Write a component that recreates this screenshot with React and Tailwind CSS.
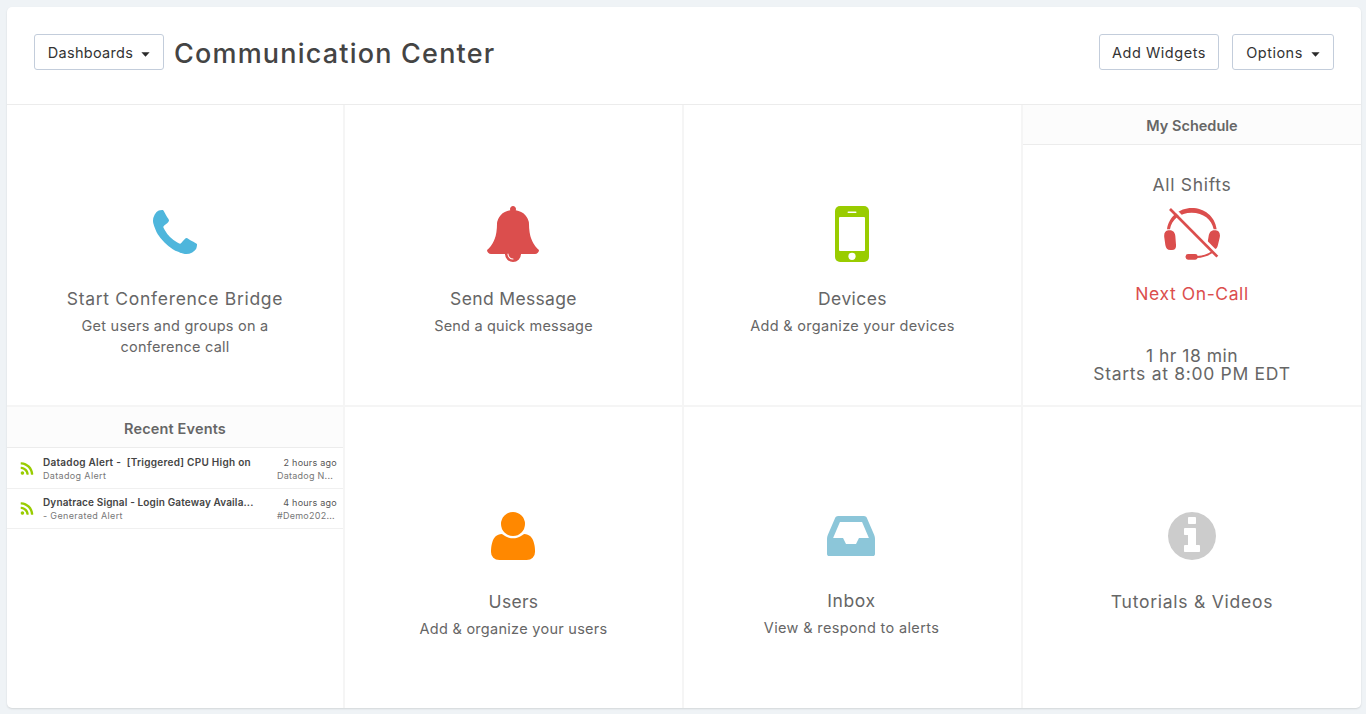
const PHONE = 'M1600 1240q0 27-10 70.5t-21 68.5q-21 50-122 106-94 51-186 51-27 0-53-3.5t-57.5-12.5-47-14.5-55.5-20.5-49-18q-98-35-175-83-127-79-264-216t-216-264q-48-77-83-175-3-9-18-49t-20.5-55.5-14.5-47-12.5-57.5-3.5-53q0-92 51-186 56-101 106-122 25-11 68.5-21t70.5-10q14 0 21 3 18 6 53 76 11 19 30 54t35 63.5 31 53.5q3 4 17.5 25t21.5 35.5 7 28.5q0 20-28.5 50t-62 55-62 53-28.5 46q0 9 5 22.5t8.5 20.5 14 24 11.5 19q76 137 174 235t235 174q2 1 19 11.5t24 14 20.5 8.5 22.5 5q18 0 46-28.5t53-62 55-62 50-28.5q14 0 28.5 7t35.5 21.5 25 17.5q25 15 53.5 31t63.5 35 54 30q70 35 76 53 3 7 3 21z';
const BELL = 'M912 1696q0-16-16-16-59 0-101.5-42.5t-42.5-101.5q0-16-16-16t-16 16q0 73 51.5 124.5t124.5 51.5q16 0 16-16zm816-288q0 52-38 90t-90 38h-448q0 106-75 181t-181 75-181-75-75-181h-448q-52 0-90-38t-38-90q50-42 91-88t85-119.5 74.5-158.5 50-206 19.5-260q0-152 117-282.5t307-158.5q-8-19-8-39 0-40 28-68t68-28 68 28 28 68q0 20-8 39 190 28 307 158.5t117 282.5q0 139 19.5 260t50 206 74.5 158.5 85 119.5 91 88z';
const USER = 'M1408 1405q0 120-73 189.5t-194 69.5h-874q-121 0-194-69.5t-73-189.5q0-53 3.5-103.5t14-109 26.5-108.5 43-97.5 62-81 85.5-53.5 111.5-20q9 0 42 21.5t74.5 48 108.5 48 133.5 21.5 133.5-21.5 108.5-48 74.5-48 42-21.5q61 0 111.5 20t85.5 53.5 62 81 43 97.5 26.5 108.5 14 109 3.5 103.5zm-320-893q0 159-112.5 271.5t-271.5 112.5-271.5-112.5-112.5-271.5 112.5-271.5 271.5-112.5 271.5 112.5 112.5 271.5z';
const INBOX = 'M1151 960h316q-1-3-2.5-8.5t-2.5-7.5l-212-496h-708l-212 496q-1 3-2.5 8.5t-2.5 7.5h316l95 192h320zm513 30v482q0 26-19 45t-45 19h-1408q-26 0-45-19t-19-45v-482q0-62 25-123l238-552q10-25 36.5-42t52.5-17h832q26 0 52.5 17t36.5 42l238 552q25 61 25 123z';
const INFO = 'M1152 1376v-160q0-14-9-23t-23-9h-96v-512q0-14-9-23t-23-9h-320q-14 0-23 9t-9 23v160q0 14 9 23t23 9h96v320h-96q-14 0-23 9t-9 23v160q0 14 9 23t23 9h448q14 0 23-9t9-23zm-128-896v-160q0-14-9-23t-23-9h-192q-14 0-23 9t-9 23v160q0 14 9 23t23 9h192q14 0 23-9t9-23zm640 416q0 209-103 385.5t-279.5 279.5-385.5 103-385.5-103-279.5-279.5-103-385.5 103-385.5 279.5-279.5 385.5-103 385.5 103 279.5 279.5 103 385.5z';
const RSS = 'M576 1344q0 80-56 136t-136 56-136-56-56-136 56-136 136-56 136 56 56 136zm512 123q2 28-17 48-18 21-47 21h-135q-25 0-43-16.5t-20-41.5q-22-229-184.5-391.5t-391.5-184.5q-25-2-41.5-20t-16.5-43v-135q0-29 21-47 17-17 43-17h5q160 13 306 80.5t259 181.5q114 113 181.5 259t80.5 306zm512 2q2 27-18 47-18 20-46 20h-143q-26 0-44.5-17.5t-19.5-42.5q-12-215-101-408.5t-231.5-336-336-231.5-408.5-102q-25-1-42.5-19.5t-17.5-43.5v-143q0-28 20-46 18-18 44-18h3q262 13 501.5 120t425.5 294q187 186 294 425.5t120 501.5z';

const EVENTS = [
  { id: 1, title: 'Datadog Alert -\u00a0 [Triggered] CPU High on', titleClass: 'tracking-[0.27px]', source: 'Datadog Alert', time: '2 hours ago', target: 'Datadog N...' },
  { id: 2, title: 'Dynatrace Signal - Login Gateway Availa...', titleClass: 'tracking-[0.14px]', source: '- Generated Alert', time: '4 hours ago', target: '#Demo202...' },
];

function Icon({ path, className, viewBox = '0 0 1792 1792' }) {
  return (
    <svg viewBox={viewBox} fill="currentColor" className={className}>
      <path d={path} />
    </svg>
  );
}

function MobileIcon() {
  return (
    <svg viewBox="0 0 56 56" className="mr-px h-14 w-14 text-[#99cc00]">
      <rect x="11" width="34" height="56" rx="5" fill="currentColor" />
      <rect x="23.5" y="5.5" width="9" height="1.5" rx="0.75" fill="white" />
      <rect x="15" y="11" width="26" height="34" rx="1" fill="white" />
      <circle cx="28" cy="50.3" r="3.6" fill="white" />
    </svg>
  );
}

function HeadsetOffIcon() {
  return (
    <svg viewBox="432 168 168 168" className="h-14 w-14 text-[#db4e4d]">
      <g fill="currentColor">
        <path d="M441 238C446 200 478 174 515 174s70 24 75 64h-9c-6-30-31-50-66-50s-60 20-65 50z" />
        <path d="M445 241c13-2 20 5 21 17l2 26c1 10-3 16-12 16h-5c-9 0-13-5-15-15l-3-22c-2-12 2-21 12-22z" />
        <path d="M587 241c-13-2-19 5-21 17l-4 24c-1 10 3 16 12 16h6c9 0 12-5 14-14l5-21c3-12-2-21-12-22z" />
        <rect x="497" y="312" width="36" height="17" rx="7" />
      </g>
      <path d="M530 321q26-1 47-15" fill="none" stroke="currentColor" strokeWidth="6" />
      <path d="M452 167l150 153" stroke="white" strokeWidth="9" />
      <path d="M450 177l142 143" stroke="currentColor" strokeWidth="8" />
    </svg>
  );
}

function Caret() {
  return (
    <svg viewBox="0 0 10 5" className="mt-[2px] ml-[8px] h-[5px] w-[9px]" fill="#2b2b2b">
      <path d="M0.4 0h9.2L5 5z" />
    </svg>
  );
}

function Button({ children, className }) {
  return (
    <button className={`flex h-9 items-center justify-center rounded-[3px] border border-[#c3cddb] bg-white pt-[2px] text-[14.5px] leading-5 text-[#333] ${className}`}>
      {children}
    </button>
  );
}

function Tile({ icon, title, titleClass, text, textClass, className = '' }) {
  return (
    <div className={`flex flex-col items-center border-[#f5f5f5] pt-[101px] text-center text-[#666] ${className}`}>
      {icon}
      <h2 className={`text-[17.5px] leading-[22px] ${titleClass}`}>{title}</h2>
      {text && <p className={`mt-[5px] w-[220px] whitespace-pre-line text-[14.5px] leading-[21px] ${textClass}`}>{text}</p>}
    </div>
  );
}

function PanelTitle({ children, className }) {
  return (
    <h2 className={`flex items-center justify-center border-b border-[#ececec] bg-[#fcfcfc] text-[14.5px] font-semibold text-[#666] ${className}`}>
      {children}
    </h2>
  );
}

function RecentEvents() {
  return (
    <div className="border-r-2 border-[#f5f5f5]">
      <PanelTitle className="h-[41px] pt-1 tracking-[0.15px]">Recent Events</PanelTitle>
      {EVENTS.map(e => (
        <div key={e.id} className="flex h-[40.5px] items-center border-b border-[#f0f0f0] pt-[1.5px] pr-[6px] pl-[11.5px]">
          <Icon path={RSS} className="h-4 w-4 text-[#99cc00]" />
          <div className="ml-[8.5px] min-w-0 flex-1 whitespace-nowrap leading-[13px]">
            <div className={`text-[10px] font-semibold text-[#444] ${e.titleClass}`}>{e.title}</div>
            <div className="text-[9px] tracking-[0.35px] text-[#777]">{e.source}</div>
          </div>
          <div className="flex w-[60px] flex-col whitespace-nowrap text-[9px] leading-[13px] tracking-[0.25px]">
            <div className="self-end text-[#555]">{e.time}</div>
            <div className="text-[#777]">{e.target}</div>
          </div>
        </div>
      ))}
    </div>
  );
}

function MySchedule() {
  return (
    <div className="border-b-2 border-[#f5f5f5] text-[#666]">
      <PanelTitle className="h-10 pt-0.5">My Schedule</PanelTitle>
      <div className="flex flex-col items-center pt-[30px] text-[17.5px] leading-[20px]">
        <p className="tracking-[0.7px]">All Shifts</p>
        <div className="mt-[11px]"><HeadsetOffIcon /></div>
        <p className="mt-[22px] tracking-[0.6px] text-[#db4e4d]">Next On-Call</p>
        <p className="mt-[43px] leading-[18px] tracking-[0.5px]">1 hr 18 min</p>
        <p className="leading-[18px] tracking-[0.7px]">Starts at 8:00 PM EDT</p>
      </div>
    </div>
  );
}

export default function App() {
  return (
    <div className="h-[714px] bg-[#eff3f6] pt-[7px] pr-[5px] pl-[7px] font-[Inter,sans-serif]">
      <div className="h-[701px] overflow-hidden rounded-[5px] bg-white shadow-[0_1px_2px_rgba(0,0,0,0.12)]">
        <header className="flex h-[98px] items-start border-b border-[#ececec] pt-[27px] pr-[27px] pl-[27px]">
          <Button className="w-[130px] tracking-[0.3px]">Dashboards<Caret /></Button>
          <h1 className="ml-[10px] pt-px text-[27px] leading-[38px] font-medium tracking-[1.2px] text-[#444]">Communication Center</h1>
          <div className="ml-auto flex gap-[13px]">
            <Button className="w-[120px] tracking-[0.55px]">Add Widgets</Button>
            <Button className="w-[102px] tracking-[0.5px]">Options<Caret /></Button>
          </div>
        </header>
        <main className="grid grid-cols-[338px_339px_339px_338px] grid-rows-[302px_302px]">
          <Tile
            icon={<Icon path={PHONE} className="h-14 w-14 text-[#4eb6dc]" />}
            title="Start Conference Bridge"
            titleClass="mt-[26px] tracking-[0.7px]"
            text={'Get users and groups on a\nconference call'}
            textClass="tracking-[0.23px]"
            className="border-r-2 border-b-2"
          />
          <Tile
            icon={<Icon path={BELL} className="mr-px h-14 w-14 text-[#db4e4d]" />}
            title="Send Message"
            titleClass="mt-[26px] tracking-[0.35px]"
            text="Send a quick message"
            textClass="tracking-[0.2px]"
            className="border-r-2 border-b-2"
          />
          <Tile
            icon={<MobileIcon />}
            title="Devices"
            titleClass="mt-[26px] tracking-[0.4px]"
            text="Add & organize your devices"
            textClass="tracking-[0.3px]"
            className="border-r-2 border-b-2"
          />
          <MySchedule />
          <RecentEvents />
          <Tile
            icon={<Icon path={USER} viewBox="-192 0 1792 1792" className="mr-px h-14 w-14 text-[#ff8800]" />}
            title="Users"
            titleClass="mt-[27px] tracking-[0.3px]"
            text="Add & organize your users"
            textClass="tracking-[0.28px]"
            className="border-r-2"
          />
          <Tile
            icon={<Icon path={INBOX} className="mr-[3px] h-14 w-14 text-[#8cc6d9]" />}
            title="Inbox"
            titleClass="mt-[26px] mr-[2px] tracking-[0.6px]"
            text="View & respond to alerts"
            textClass="tracking-[0.35px] pr-[2px]"
            className="border-r-2"
          />
          <Tile
            icon={<Icon path={INFO} className="h-14 w-14 text-[#cccccc]" />}
            title="Tutorials & Videos"
            titleClass="mt-[27px] tracking-[0.75px]"
          />
        </main>
      </div>
    </div>
  );
}
